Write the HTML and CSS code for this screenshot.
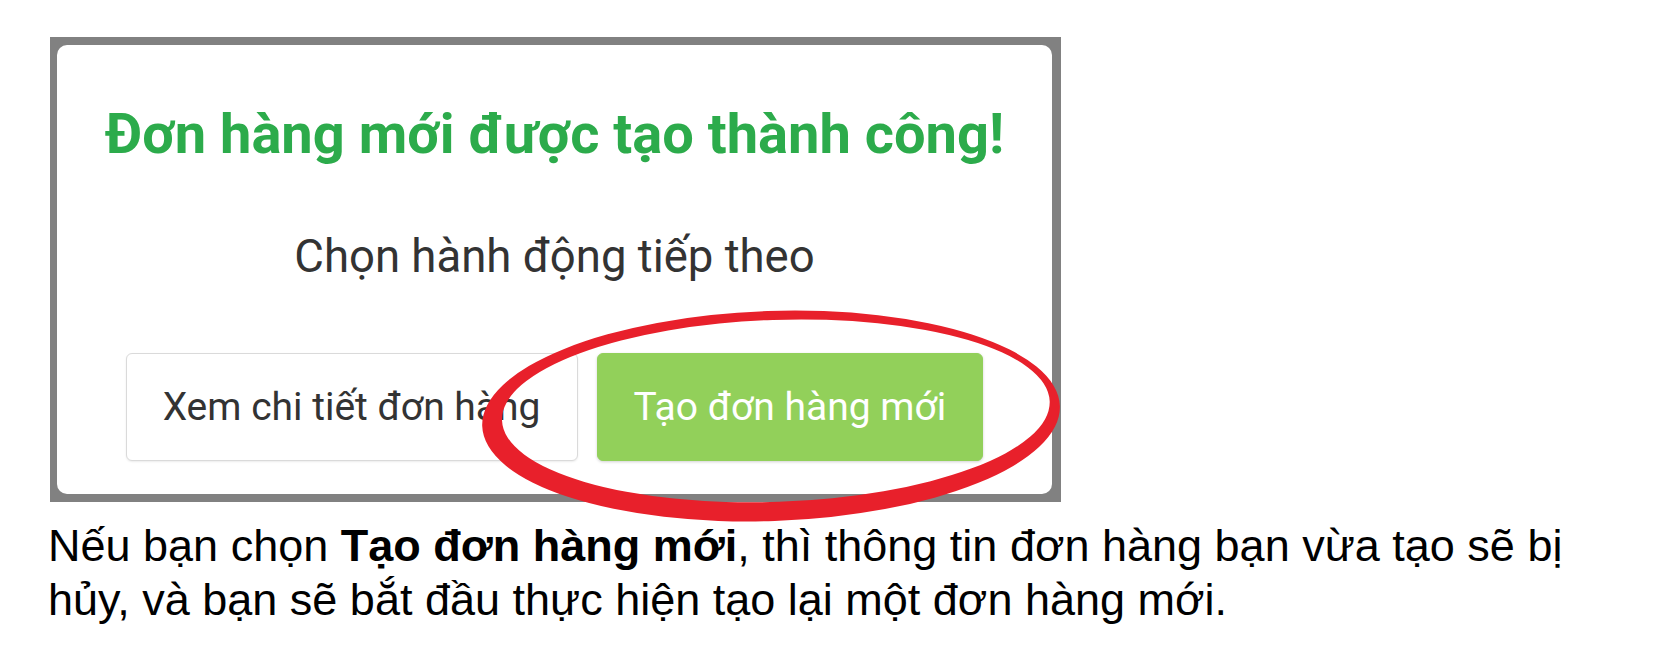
FILE: index.html
```html
<!DOCTYPE html>
<html lang="vi">
<head>
<meta charset="utf-8">
<title>Đơn hàng mới</title>
<link rel="stylesheet" href="styles.css">
</head>
<body>
<div class="page">
  <div class="shot">
    <div class="modal">
      <h2 class="title">Đơn hàng mới được tạo thành công!</h2>
      <p class="subtitle">Chọn hành động tiếp theo</p>
      <div class="actions">
        <button class="btn btn-default" type="button">Xem chi tiết đơn hàng</button>
        <button class="btn btn-success" type="button">Tạo đơn hàng mới</button>
      </div>
    </div>
  </div>
  <p class="note">Nếu bạn chọn <b>Tạo đơn hàng mới</b>, thì thông tin đơn hàng bạn vừa tạo sẽ bị hủy, và bạn sẽ bắt đầu thực hiện tạo lại một đơn hàng mới.</p>
  <svg class="mark" width="1653" height="651" viewBox="0 0 1653 651" aria-hidden="true">
    <path fill="#e8202b" fill-rule="evenodd" transform="rotate(-2 771 415)"
      d="M482 416 A289 105 0 1 0 1060 416 A289 105 0 1 0 482 416 Z
         M502 411 A274 91 0 1 0 1050 411 A274 91 0 1 0 502 411 Z"/>
  </svg>
</div>
</body>
</html>
```

FILE: styles.css
```css
html, body {
  margin: 0;
  padding: 0;
  background: #ffffff;
}

.page {
  position: relative;
  padding: 37px 0 0 48px;
  min-height: 614px;
}

.shot {
  width: 1011px;
  height: 465px;
  margin-left: 2px;
  box-sizing: border-box;
  padding: 8px 9px 8px 7px;
  background: #818181;
}

.modal {
  height: 100%;
  background: #ffffff;
  border-radius: 10px;
  display: flex;
  flex-direction: column;
  align-items: center;
  padding-top: 56px;
  box-sizing: border-box;
  font-family: Roboto, "Noto Sans", sans-serif;
}

.title {
  margin: 0;
  font-size: 56px;
  font-weight: 700;
  line-height: 66px;
  color: #2cab4b;
}

.subtitle {
  margin: 63px 0 0;
  font-size: 45.5px;
  line-height: 53px;
  font-weight: 400;
  color: #333333;
}

.actions {
  margin-top: 70px;
  display: flex;
  align-items: center;
  gap: 19px;
}

.btn {
  font-family: Roboto, "Noto Sans", sans-serif;
  font-size: 39px;
  line-height: 46px;
  padding: 30px 36px;
  border-radius: 6px;
  border: 1px solid transparent;
  margin: 0;
}

.btn-default {
  background: #ffffff;
  color: #333333;
  border-color: #dadada;
  box-shadow: 0 1px 2px rgba(0, 0, 0, 0.08);
}

.btn-success {
  background: #92d05a;
  border-color: #92d05a;
  color: #ffffff;
  box-shadow: 0 1px 3px rgba(0, 0, 0, 0.18);
}

.note {
  margin: 17px 0 0;
  width: 1550px;
  font-family: "Liberation Sans", Arial, sans-serif;
  font-size: 45px;
  line-height: 54px;
  color: #000000;
}

.note b {
  font-weight: 700;
}

.mark {
  position: absolute;
  left: 0;
  top: 0;
  pointer-events: none;
}
```
